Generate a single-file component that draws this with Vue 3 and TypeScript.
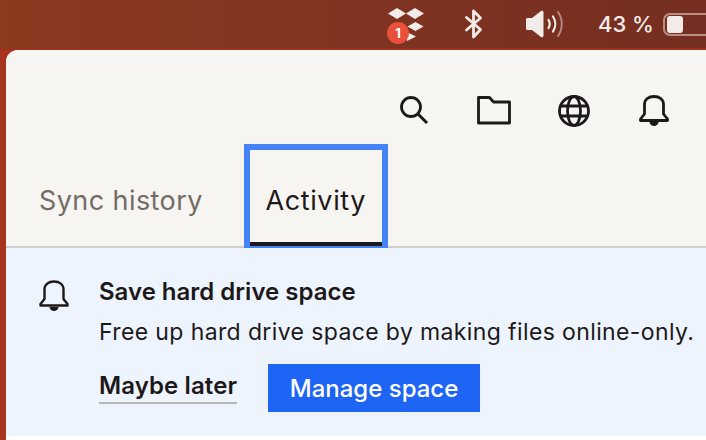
<script setup lang="ts">
const title = 'Save hard drive space'
const body = 'Free up hard drive space by making files online-only.'
</script>

<template>
  <div class="screen">
    <header class="menubar">
      <div class="dropbox">
        <svg width="38" height="36" viewBox="0 0 38 36" fill="#f1ece9">
          <path d="M10 1l9 5.500-9 5.500-9-5.500zM28 1l9 5.500-9 5.500-9-5.500zM28.500 15l8 4.500-8 4.500-8-4.500zM20 25l9 4.500-9 4.500z" />
        </svg>
        <span class="badge">1</span>
      </div>
      <svg class="bt" width="20" height="30" viewBox="0 0 20 30" fill="none" stroke="#f1ece9" stroke-width="2.800" stroke-linecap="round" stroke-linejoin="round">
        <path d="M2.500 8.500l14 12-7 7.500V2l7 7-14 12" />
      </svg>
      <svg class="vol" width="40" height="30" viewBox="0 0 40 30" fill="none">
        <path d="M1 10.500c0-.8.600-1.500 1.500-1.500H7l9-7c1-.7 2.500-.2 2.500 1.200v23.600c0 1.400-1.500 1.900-2.500 1.200l-9-7H2.500C1.600 21 1 20.300 1 19.500z" fill="#f1ece9" />
        <path d="M23.500 11c1.500 2.500 1.500 5.500 0 8" stroke="#f1ece9" stroke-width="2.200" stroke-linecap="round" />
        <path d="M28 7.500c3 4.500 3 10.500 0 15" stroke="#f1ece9" stroke-width="2.200" stroke-linecap="round" />
        <path d="M33 3c5 7 5 17 0 24" stroke="#b98f85" stroke-width="1.800" stroke-linecap="round" />
      </svg>
      <span class="pct">43 %</span>
      <div class="battery"><span class="level"></span></div>
    </header>

    <main class="panel">
      <div class="tools">
        <svg width="30" height="30" viewBox="0 0 30 30" fill="none" stroke="#1e1919" stroke-width="2.800">
          <circle cx="12" cy="12" r="9.500" />
          <path d="M19 19l9 9" stroke-width="3" />
        </svg>
        <svg width="34" height="30" viewBox="0 0 34 30" fill="none" stroke="#1e1919" stroke-width="2.800" stroke-linejoin="round">
          <path d="M1.500 2.500h11l4 4.500h16v21h-31z" />
        </svg>
        <svg width="32" height="32" viewBox="0 0 32 32" fill="none" stroke="#1e1919" stroke-width="2.800">
          <circle cx="16" cy="16" r="14.500" />
          <ellipse cx="16" cy="16" rx="6.500" ry="14.500" />
          <path d="M2.500 11h27M2.500 21h27" />
        </svg>
        <svg width="30" height="32" viewBox="0 0 30 32" fill="none" stroke="#1e1919" stroke-width="2.800" stroke-linejoin="round">
          <path d="M1.500 25.500v-1.500l4-5V9.500C5.500 4.500 9.500 1.500 15 1.500s9.500 3 9.500 8V19l4 5v1.500z" />
          <path d="M10.500 27h9c0 2-2 4-4.500 4s-4.500-2-4.500-4z" fill="#1e1919" stroke="none" />
        </svg>
      </div>

      <nav class="tabs">
        <button class="tab">Sync history</button>
        <button class="tab active"><span class="label">Activity</span></button>
      </nav>

      <section class="notice">
        <svg class="bell" width="30" height="32" viewBox="0 0 30 32" fill="none" stroke="#1e1919" stroke-width="2.400" stroke-linejoin="round">
          <path d="M1.500 25.500v-1.500l4-5V9.500C5.500 4.500 9.500 1.500 15 1.500s9.500 3 9.500 8V19l4 5v1.500z" />
          <path d="M10.500 27h9c0 2-2 4-4.500 4s-4.500-2-4.500-4z" fill="#1e1919" stroke="none" />
        </svg>
        <div class="copy">
          <h2>{{ title }}</h2>
          <p>{{ body }}</p>
          <div class="actions">
            <a class="later">Maybe later</a>
            <button class="primary">Manage space</button>
          </div>
        </div>
      </section>
    </main>
  </div>
</template>

<style>
html, body { margin: 0; background: #fff; overflow: hidden; }
</style>

<style scoped>
.screen {
  width: 706px;
  height: 440px;
  overflow: hidden;
  background: #a83520;
  font-family: Inter, "Liberation Sans", sans-serif;
  color: #1e1919;
}
.menubar {
  height: 48px;
  border-bottom: 2px solid #9a3420;
  background: linear-gradient(90deg, #8c3a20, #752e21);
  display: flex;
  align-items: center;
  overflow: hidden;
}
.menubar > * { flex: none; }
.dropbox { position: relative; margin-left: 387px; width: 38px; height: 36px; margin-top: 2px; }
.dropbox svg { display: block; }
.badge {
  position: absolute;
  left: 0;
  top: 15px;
  width: 22px;
  height: 22px;
  border-radius: 50%;
  background: #e8503a;
  color: #fff;
  font-size: 13px;
  font-weight: 700;
  line-height: 22px;
  text-align: center;
}
.bt { margin-left: 39px; }
.vol { margin-left: 41px; }
.pct {
  margin-left: 33px;
  width: 54px;
  font-size: 22px;
  font-weight: 500;
  color: #f1ece9;
  white-space: nowrap;
}
.battery {
  margin-left: 11px;
  width: 60px;
  height: 23px;
  box-sizing: border-box;
  border: 2px solid #b98f85;
  border-radius: 7px;
  padding: 1px 2px;
}
.level { display: block; width: 16px; height: 17px; border-radius: 3px; background: #f1ece9; }
.panel {
  margin-left: 6px;
  height: 390px;
  background: #fff;
  border-radius: 12px 0 0 0;
  overflow: hidden;
}
.tools {
  height: 94px;
  box-sizing: border-box;
  padding: 45px 0 0 393px;
  background: #f6f5f2;
  display: flex;
  align-items: flex-start;
}
.tools svg { flex: none; }
.tools svg:nth-child(2) { margin-left: 48px; }
.tools svg:nth-child(3) { margin-left: 47px; }
.tools svg:nth-child(4) { margin-left: 49px; }
.tabs {
  height: 104px;
  box-sizing: border-box;
  padding-left: 33px;
  background: #f6f5f2;
  border-bottom: 2px solid #d3d0cb;
  display: flex;
  gap: 41px;
}
.tab {
  appearance: none;
  border: 0;
  background: none;
  padding: 0;
  margin: 0;
  font: inherit;
  font-size: 27px;
  letter-spacing: .42px;
  color: #736c64;
  height: 102px;
  padding-top: 10px;
  box-sizing: border-box;
}
.tab.active {
  color: #1e1919;
  height: 104px;
  width: 144px;
  padding: 0;
  border-style: solid;
  border-color: #4482f8;
  border-width: 6px 6px 2px;
  letter-spacing: .6px;
  display: flex;
  justify-content: center;
  box-sizing: border-box;
}
.label {
  display: block;
  width: 100%;
  height: 96px;
  box-sizing: border-box;
  padding-top: 34px;
  border-bottom: 4px solid #1e1919;
}
.notice {
  height: 188px;
  background: #edf4fe;
  box-sizing: border-box;
  padding: 29px 0 0 33px;
  display: flex;
  align-items: flex-start;
}
.bell { flex: none; margin-top: 3px; }
.copy { margin-left: 30px; white-space: nowrap; }
h2 { margin: 0; font-size: 24px; font-weight: 600; line-height: 30px; }
p { margin: 10px 0 0; font-size: 23px; letter-spacing: .38px; line-height: 30px; color: #1e1919; }
.actions { display: flex; align-items: flex-start; margin-top: 17px; }
.later {
  font-size: 24px;
  font-weight: 600;
  line-height: 33px;
  padding-top: 5px;
  letter-spacing: .1px;
  border-bottom: 2px solid #b8b6b2;
}
.primary {
  margin-left: 31px;
  width: 212px;
  height: 48px;
  border: 0;
  padding: 0;
  background: #1e64f5;
  color: #fff;
  font: inherit;
  font-size: 24px;
  font-weight: 500;
}
</style>
